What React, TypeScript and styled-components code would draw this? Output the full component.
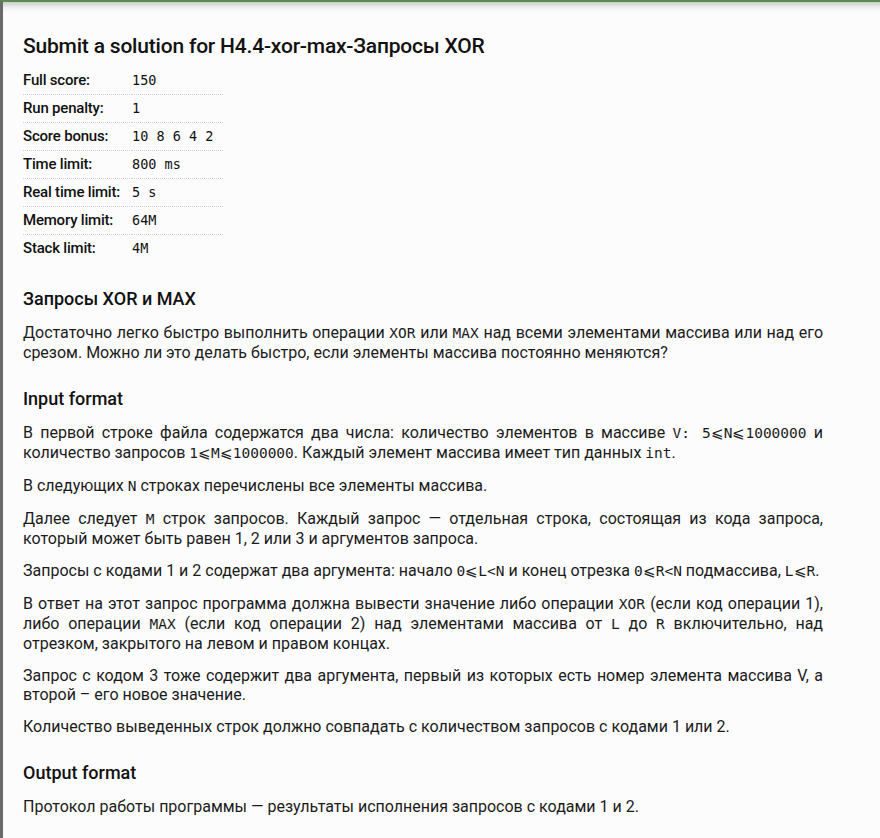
import React from "react";
import styled, { createGlobalStyle } from "styled-components";

const GlobalStyle = createGlobalStyle`
  html, body { margin: 0; padding: 0; background: #fcfcfc; }
  body { font-family: Roboto, "Noto Sans", Arial, sans-serif; color: #1b1b1b; }
`;

const Page = styled.div`
  box-sizing: border-box;
  min-height: 100vh;
  border-top: 2px solid #5a8c50;
  border-left: 3px solid #6a6a6a;
  background: #fcfcfc;
  box-shadow: inset 0 10px 8px -8px rgba(0, 0, 0, 0.28);
  padding: 32px 57px 24px 20px;
`;

const Title = styled.h1`
  margin: 0 0 8px;
  font-size: 21px;
  line-height: 24px;
  font-weight: 500;
  color: #111;
  letter-spacing: -0.2px;
`;

const Limits = styled.div`
  display: grid;
  grid-template-columns: 109px 91px;
  width: 200px;
`;

const Label = styled.div<{ $first?: boolean }>`
  font-size: 15px;
  font-weight: 500;
  line-height: 27px;
  color: #111;
  letter-spacing: -0.2px;
  border-top: ${(p) => (p.$first ? "1px solid transparent" : "1px dotted #cfcfcf")};
  white-space: nowrap;
`;

const Value = styled.div<{ $first?: boolean }>`
  font-family: "DejaVu Sans Mono", "Liberation Mono", monospace;
  font-size: 13.5px;
  line-height: 27px;
  color: #111;
  border-top: ${(p) => (p.$first ? "1px solid transparent" : "1px dotted #cfcfcf")};
  white-space: pre;
`;

const Heading = styled.h2`
  margin: 26px 0 13px;
  font-size: 18px;
  line-height: 22px;
  font-weight: 500;
  color: #111;
`;

const Para = styled.p`
  margin: 0 0 13px;
  font-size: 16px;
  line-height: 19px;
  text-align: justify;
`;

const Code = styled.code`
  font-family: "DejaVu Sans Mono", "Liberation Mono", monospace;
  font-size: 14.5px;
`;

const limits: [string, string][] = [
  ["Full score:", "150"],
  ["Run penalty:", "1"],
  ["Score bonus:", "10 8 6 4 2"],
  ["Time limit:", "800 ms"],
  ["Real time limit:", "5 s"],
  ["Memory limit:", "64M"],
  ["Stack limit:", "4M"],
];

export default function App() {
  return (
    <>
      <GlobalStyle />
      <Page>
        <Title>Submit a solution for H4.4-xor-max-Запросы XOR</Title>
        <Limits>
          {limits.map(([k, v], i) => (
            <React.Fragment key={k}>
              <Label $first={i === 0}>{k}</Label>
              <Value $first={i === 0}>{v}</Value>
            </React.Fragment>
          ))}
        </Limits>

        <Heading>Запросы XOR и MAX</Heading>
        <Para>
          Достаточно легко быстро выполнить операции <Code>XOR</Code> или <Code>MAX</Code> над
          всеми элементами массива или над его срезом. Можно ли это делать быстро, если элементы
          массива постоянно меняются?
        </Para>

        <Heading>Input format</Heading>
        <Para>
          В первой строке файла содержатся два числа: количество элементов в массиве{" "}
          <Code>V:  5⩽N⩽1000000</Code> и количество запросов <Code>1⩽M⩽1000000</Code>. Каждый
          элемент массива имеет тип данных <Code>int</Code>.
        </Para>
        <Para>
          В следующих <Code>N</Code> строках перечислены все элементы массива.
        </Para>
        <Para>
          Далее следует <Code>M</Code> строк запросов. Каждый запрос — отдельная строка,
          состоящая из кода запроса, который может быть равен 1, 2 или 3 и аргументов запроса.
        </Para>
        <Para>
          Запросы с кодами 1 и 2 содержат два аргумента: начало <Code>0⩽L&lt;N</Code> и конец
          отрезка <Code>0⩽R&lt;N</Code> подмассива, <Code>L⩽R</Code>.
        </Para>
        <Para>
          В ответ на этот запрос программа должна вывести значение либо операции <Code>XOR</Code>{" "}
          (если код операции 1), либо операции <Code>MAX</Code> (если код операции 2) над
          элементами массива от <Code>L</Code> до <Code>R</Code> включительно, над отрезком,
          закрытого на левом и правом концах.
        </Para>
        <Para>
          Запрос с кодом 3 тоже содержит два аргумента, первый из которых есть номер элемента
          массива V, а второй – его новое значение.
        </Para>
        <Para>
          Количество выведенных строк должно совпадать с количеством запросов с кодами 1 или 2.
        </Para>

        <Heading>Output format</Heading>
        <Para>Протокол работы программы — результаты исполнения запросов с кодами 1 и 2.</Para>
      </Page>
    </>
  );
}
